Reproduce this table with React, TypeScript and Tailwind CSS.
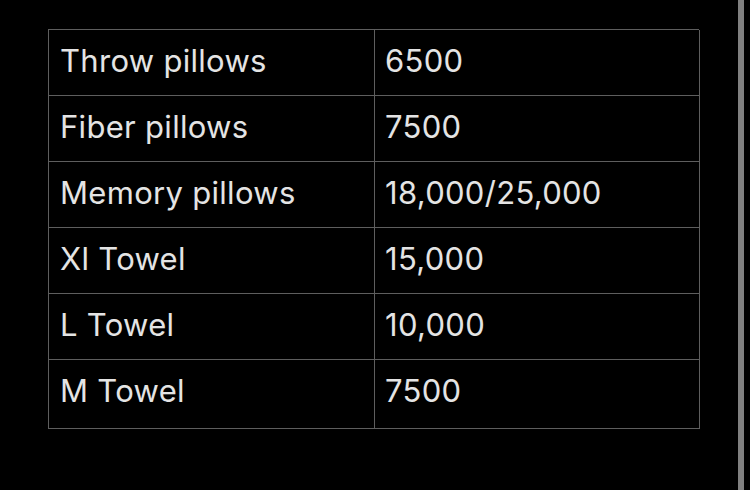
const rows: [string, string][] = [
  ["Throw pillows", "6500"],
  ["Fiber pillows", "7500"],
  ["Memory pillows", "18,000/25,000"],
  ["Xl Towel", "15,000"],
  ["L Towel", "10,000"],
  ["M Towel", "7500"],
];

export default function App() {
  return (
    <div className="flex h-[490px] w-[750px] bg-black" style={{ fontFamily: "Inter, 'Liberation Sans', sans-serif" }}>
      <div className="flex-1 pl-[48px] pt-[29px]">
        <div className="grid w-[651px] grid-cols-[326px_325px] border-l border-t border-[#5e5e5e]">
          {rows.map(([name, price], i) => (
            <div key={name} className="contents">
              <div
                className={`flex items-center border-b border-r border-[#5e5e5e] pl-[11px] text-[31px] tracking-[0.3px] text-[#e4e4e4] ${i === rows.length - 1 ? "h-[69px] pb-[6px]" : "h-[66px] pb-[2px]"}`}
              >
                {name}
              </div>
              <div
                className={`flex items-center border-b border-r border-[#5e5e5e] pl-[10px] text-[31px] tracking-[0.3px] text-[#e4e4e4] ${i === rows.length - 1 ? "h-[69px] pb-[6px]" : "h-[66px] pb-[2px]"}`}
              >
                {price}
              </div>
            </div>
          ))}
        </div>
      </div>
      <div className="mr-[6px] w-[6px] bg-[#808080]" />
    </div>
  );
}
